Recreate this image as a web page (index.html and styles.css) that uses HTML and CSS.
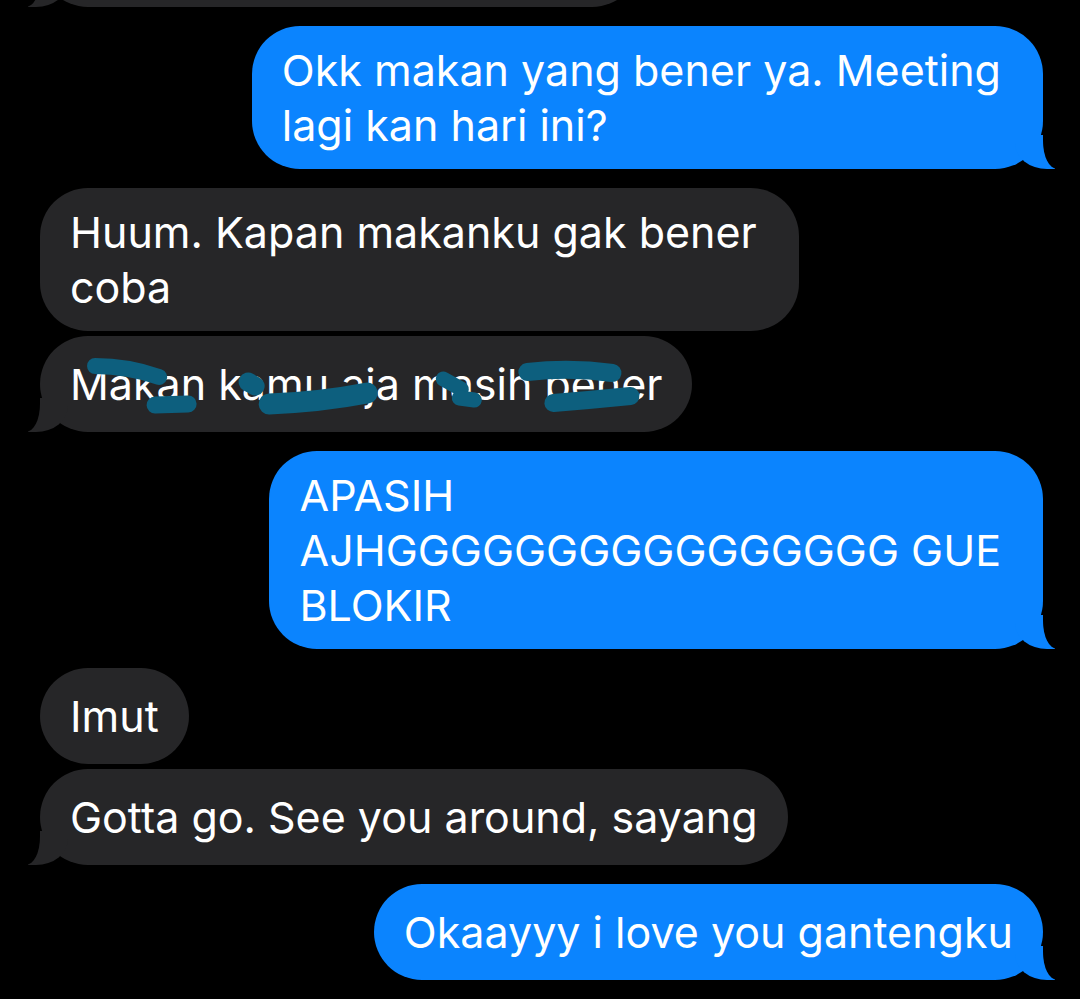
FILE: index.html
```html
<!DOCTYPE html>
<html lang="en">
<head>
    <meta charset="UTF-8">
    <meta name="viewport" content="width=device-width, initial-scale=1.0">
    <title>Messages</title>
    <link rel="stylesheet" href="styles.css">
</head>
<body>
    <div class="chat">
        <!-- cut off at the top of the screenshot -->
        <div class="bubble received tail cut-off">&nbsp;</div>

        <div class="bubble sent tail multi group-start">Okk makan yang bener ya. Meeting<br>lagi kan hari ini?</div>

        <div class="bubble received multi group-start">Huum. Kapan makanku gak bener<br>coba</div>
        <div class="bubble received tail scribbled">
            Makan kamu aja masih bener
            <svg class="scribble" viewBox="0 0 652 96" preserveAspectRatio="none">
                <path d="M55 30 Q88 30 119 41" stroke-width="16"/>
                <path d="M115 69 L148 68" stroke-width="17"/>
                <path d="M208 46 L215 50" stroke-width="19"/>
                <path d="M229 68 Q280 66 327 57" stroke-width="21"/>
                <path d="M403 43 L421 53" stroke-width="15"/>
                <path d="M419 62 L434 64" stroke-width="15"/>
                <path d="M487 36 Q530 31 572 37" stroke-width="18"/>
                <path d="M513 67 Q550 64 590 60" stroke-width="18"/>
            </svg>
        </div>

        <div class="bubble sent tail multi group-start">APASIH<br>AJHGGGGGGGGGGGGGGGG GUE<br>BLOKIR</div>

        <div class="bubble received group-start">Imut</div>
        <div class="bubble received tail">Gotta go. See you around, sayang</div>

        <div class="bubble sent tail group-start">Okaayyy i love you gantengku</div>
    </div>
</body>
</html>
```

FILE: styles.css
```css
/* General Page Styles */
body {
    margin: 0;
    padding: 0;
    background-color: #000;
    font-family: "Inter", "Noto Sans", sans-serif;
    overflow: hidden;
}

.chat {
    display: flex;
    flex-direction: column;
    padding: 0 37px 0 40px;
}

/* Message bubbles */
.bubble {
    position: relative;
    display: flex;
    align-items: center;
    box-sizing: border-box;
    min-height: 96px;
    padding: 16.5px 30px;
    border-radius: 48px;
    font-size: 43px;
    line-height: 55px;
    color: #fff;
    margin-top: 5px;
}

.bubble.group-start {
    margin-top: 19px;
}

.bubble.multi {
    padding-right: 42px;
}

.sent {
    align-self: flex-end;
    background-color: #0b84fe;
}

.received {
    align-self: flex-start;
    background-color: #262628;
}

/* Tails */
.tail::before,
.tail::after {
    content: "";
    position: absolute;
    bottom: 0;
    height: 34px;
}

.sent.tail::before {
    right: -12px;
    width: 40px;
    background-color: #0b84fe;
    border-bottom-left-radius: 32px 26px;
}

.sent.tail::after {
    left: 100%;
    width: 30px;
    background-color: #000;
    border-bottom-left-radius: 14px 28px;
}

.received.tail::before {
    left: -12px;
    width: 40px;
    background-color: #262628;
    border-bottom-right-radius: 32px 26px;
}

.received.tail::after {
    right: 100%;
    width: 30px;
    background-color: #000;
    border-bottom-right-radius: 14px 28px;
}

/* First bubble only shows its bottom edge */
.cut-off {
    width: 600px;
    margin-top: -89px;
}

/* Pen marks drawn over the message */
.scribble {
    position: absolute;
    left: 0;
    top: 0;
    width: 100%;
    height: 100%;
    fill: none;
    stroke: #0d5f7e;
    stroke-linecap: round;
}
```
